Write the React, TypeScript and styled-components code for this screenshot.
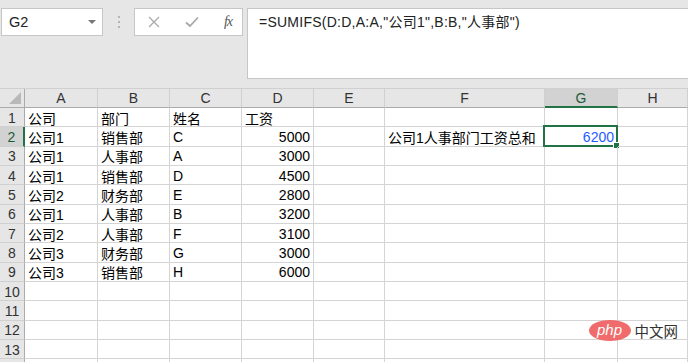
import React from "react";
import styled, { createGlobalStyle } from "styled-components";

const GlobalStyle = createGlobalStyle`
  html, body {
    margin: 0;
    padding: 0;
    background: #ffffff;
  }
  body {
    font-family: "Liberation Sans", "Noto Sans CJK SC", sans-serif;
    overflow: hidden;
  }
`;

const COLORS = {
  chrome: "#e6e6e6",
  border: "#c6c6c6",
  grid: "#d4d4d4",
  headerLine: "#ababab",
  selectedHeader: "#d2d2d2",
  green: "#217346",
  blue: "#1f5cff",
  text: "#000000",
};

const Page = styled.div`
  width: 688px;
  height: 362px;
  position: relative;
  overflow: hidden;
  background: #ffffff;
`;

const Toolbar = styled.div`
  height: 89px;
  box-sizing: border-box;
  background: ${COLORS.chrome};
  padding: 8px 0 0 1px;
  display: flex;
  align-items: flex-start;
  border-bottom: 1px solid #d0d0d0;
`;

const NameBox = styled.div`
  width: 102px;
  height: 28px;
  box-sizing: border-box;
  background: #ffffff;
  border: 1px solid ${COLORS.border};
  display: flex;
  align-items: center;
  justify-content: space-between;
  padding: 0 6px 0 7px;
  font-size: 14.5px;
  color: #222;
`;

const Caret = styled.span`
  width: 0;
  height: 0;
  border-left: 4px solid transparent;
  border-right: 4px solid transparent;
  border-top: 4px solid #777;
`;

const Dots = styled.div`
  width: 31px;
  height: 28px;
  display: flex;
  flex-direction: column;
  align-items: center;
  justify-content: center;
  gap: 3px;

  span {
    width: 2px;
    height: 2px;
    background: #b5b5b5;
  }
`;

const FuncBox = styled.div`
  width: 109px;
  height: 28px;
  box-sizing: border-box;
  background: #ffffff;
  border: 1px solid ${COLORS.border};
  display: flex;
  align-items: center;
  padding: 0 10px 0 13px;
  justify-content: space-between;
  margin-right: 4px;
`;

const Fx = styled.span`
  font-family: "Liberation Serif", serif;
  font-style: italic;
  font-size: 14px;
  color: #555;
  letter-spacing: -1px;
`;

const FormulaBar = styled.div`
  flex: 1;
  height: 71px;
  box-sizing: border-box;
  background: #ffffff;
  border: 1px solid ${COLORS.border};
  border-right: none;
  padding: 4px 0 0 11px;
  font-size: 14px;
  line-height: 18px;
  letter-spacing: 0.25px;
  color: #222;
  white-space: nowrap;
`;

const Sheet = styled.div`
  display: grid;
  grid-template-columns: 25px 73px 72px 72px 72px 71px 160px 73px 1fr;
  grid-template-rows: 19px;
  grid-auto-rows: 19.33px;
`;

const ColHeader = styled.div<{ $active?: boolean }>`
  box-sizing: border-box;
  background: ${(p) => (p.$active ? COLORS.selectedHeader : COLORS.chrome)};
  border-right: 1px solid #d0d0d0;
  border-bottom: ${(p) =>
    p.$active ? `2px solid ${COLORS.green}` : `1px solid ${COLORS.headerLine}`};
  display: flex;
  align-items: center;
  justify-content: center;
  font-size: 14px;
  color: ${(p) => (p.$active ? "#1e5a3a" : "#333")};
  padding-top: ${(p) => (p.$active ? "1px" : "0")};
`;

const Corner = styled.div`
  box-sizing: border-box;
  background: ${COLORS.chrome};
  border-right: 1px solid ${COLORS.headerLine};
  border-bottom: 1px solid ${COLORS.headerLine};
  position: relative;

  &::after {
    content: "";
    position: absolute;
    right: 3px;
    bottom: 3px;
    border-left: 12px solid transparent;
    border-bottom: 12px solid #b9b9b9;
  }
`;

const RowHeader = styled.div<{ $active?: boolean }>`
  box-sizing: border-box;
  background: ${(p) => (p.$active ? COLORS.selectedHeader : COLORS.chrome)};
  border-right: ${(p) =>
    p.$active ? `2px solid ${COLORS.green}` : `1px solid ${COLORS.headerLine}`};
  border-bottom: 1px solid #d0d0d0;
  display: flex;
  align-items: center;
  justify-content: center;
  font-size: 14px;
  color: ${(p) => (p.$active ? "#1e5a3a" : "#333")};
  padding-top: 1px;
`;

const Cell = styled.div<{ $align?: "left" | "right"; $color?: string }>`
  box-sizing: border-box;
  border-right: 1px solid ${COLORS.grid};
  border-bottom: 1px solid ${COLORS.grid};
  display: flex;
  align-items: center;
  justify-content: ${(p) => (p.$align === "right" ? "flex-end" : "flex-start")};
  padding: 1px 3px 0 3px;
  font-size: 14px;
  color: ${(p) => p.$color || COLORS.text};
  white-space: nowrap;
  position: relative;
`;

const Selection = styled.div`
  position: absolute;
  left: -2px;
  top: -2px;
  right: -1px;
  bottom: -1px;
  border: 2px solid ${COLORS.green};
  pointer-events: none;

  &::after {
    content: "";
    position: absolute;
    right: -4px;
    bottom: -4px;
    width: 5px;
    height: 5px;
    background: ${COLORS.green};
    border: 1px solid #ffffff;
  }
`;

const Watermark = styled.div`
  position: absolute;
  right: 10px;
  bottom: 21px;
  display: flex;
  align-items: center;
  gap: 4px;
`;

const PhpPill = styled.div`
  width: 42px;
  height: 21px;
  border-radius: 50%;
  background: #f06b6b;
  color: #ffffff;
  font-family: "Liberation Sans", sans-serif;
  font-style: italic;
  font-size: 15px;
  line-height: 19px;
  text-align: center;
`;

const SiteName = styled.span`
  font-family: "Noto Sans CJK SC", sans-serif;
  font-size: 14.5px;
  line-height: 20px;
  color: #333;
`;

const columns = ["A", "B", "C", "D", "E", "F", "G", "H"];

const data: [string, string, string, string][] = [
  ["公司", "部门", "姓名", "工资"],
  ["公司1", "销售部", "C", "5000"],
  ["公司1", "人事部", "A", "3000"],
  ["公司1", "销售部", "D", "4500"],
  ["公司2", "财务部", "E", "2800"],
  ["公司1", "人事部", "B", "3200"],
  ["公司2", "人事部", "F", "3100"],
  ["公司3", "财务部", "G", "3000"],
  ["公司3", "销售部", "H", "6000"],
];

// the 14th row only peeks in at the bottom edge, so it gets no number
const NUMBERED_ROWS = 13;
const TOTAL_ROWS = 14;

const CrossIcon = () => (
  <svg width="12" height="12" viewBox="0 0 12 12">
    <path d="M1 1 L11 11 M11 1 L1 11" stroke="#a8a8a8" strokeWidth="1.2" fill="none" />
  </svg>
);

const CheckIcon = () => (
  <svg width="14" height="12" viewBox="0 0 14 12">
    <path d="M1 6.5 L5 10 L13 1.5" stroke="#a8a8a8" strokeWidth="1.8" fill="none" />
  </svg>
);

const App = (): JSX.Element => {
  const renderRow = (index: number) => {
    const rowNo = index + 1;
    const row = data[index];
    const isActive = rowNo === 2;
    return (
      <React.Fragment key={rowNo}>
        <RowHeader $active={isActive}>{rowNo <= NUMBERED_ROWS ? rowNo : ""}</RowHeader>
        <Cell>{row ? row[0] : ""}</Cell>
        <Cell>{row ? row[1] : ""}</Cell>
        <Cell>{row ? row[2] : ""}</Cell>
        <Cell $align={index === 0 ? "left" : "right"}>{row ? row[3] : ""}</Cell>
        <Cell />
        <Cell>{isActive ? "公司1人事部门工资总和" : ""}</Cell>
        <Cell $align="right" $color={isActive ? COLORS.blue : undefined}>
          {isActive && (
            <>
              6200
              <Selection />
            </>
          )}
        </Cell>
        <Cell />
      </React.Fragment>
    );
  };

  return (
    <Page>
      <GlobalStyle />
      <Toolbar>
        <NameBox>
          G2
          <Caret />
        </NameBox>
        <Dots>
          <span />
          <span />
          <span />
        </Dots>
        <FuncBox>
          <CrossIcon />
          <CheckIcon />
          <Fx>fx</Fx>
        </FuncBox>
        <FormulaBar>=SUMIFS(D:D,A:A,"公司1",B:B,"人事部")</FormulaBar>
      </Toolbar>
      <Sheet>
        <Corner />
        {columns.map((c) => (
          <ColHeader key={c} $active={c === "G"}>
            {c}
          </ColHeader>
        ))}
        {Array.from({ length: TOTAL_ROWS }, (_, i) => renderRow(i))}
      </Sheet>
      <Watermark>
        <PhpPill>php</PhpPill>
        <SiteName>中文网</SiteName>
      </Watermark>
    </Page>
  );
};

export default App;
